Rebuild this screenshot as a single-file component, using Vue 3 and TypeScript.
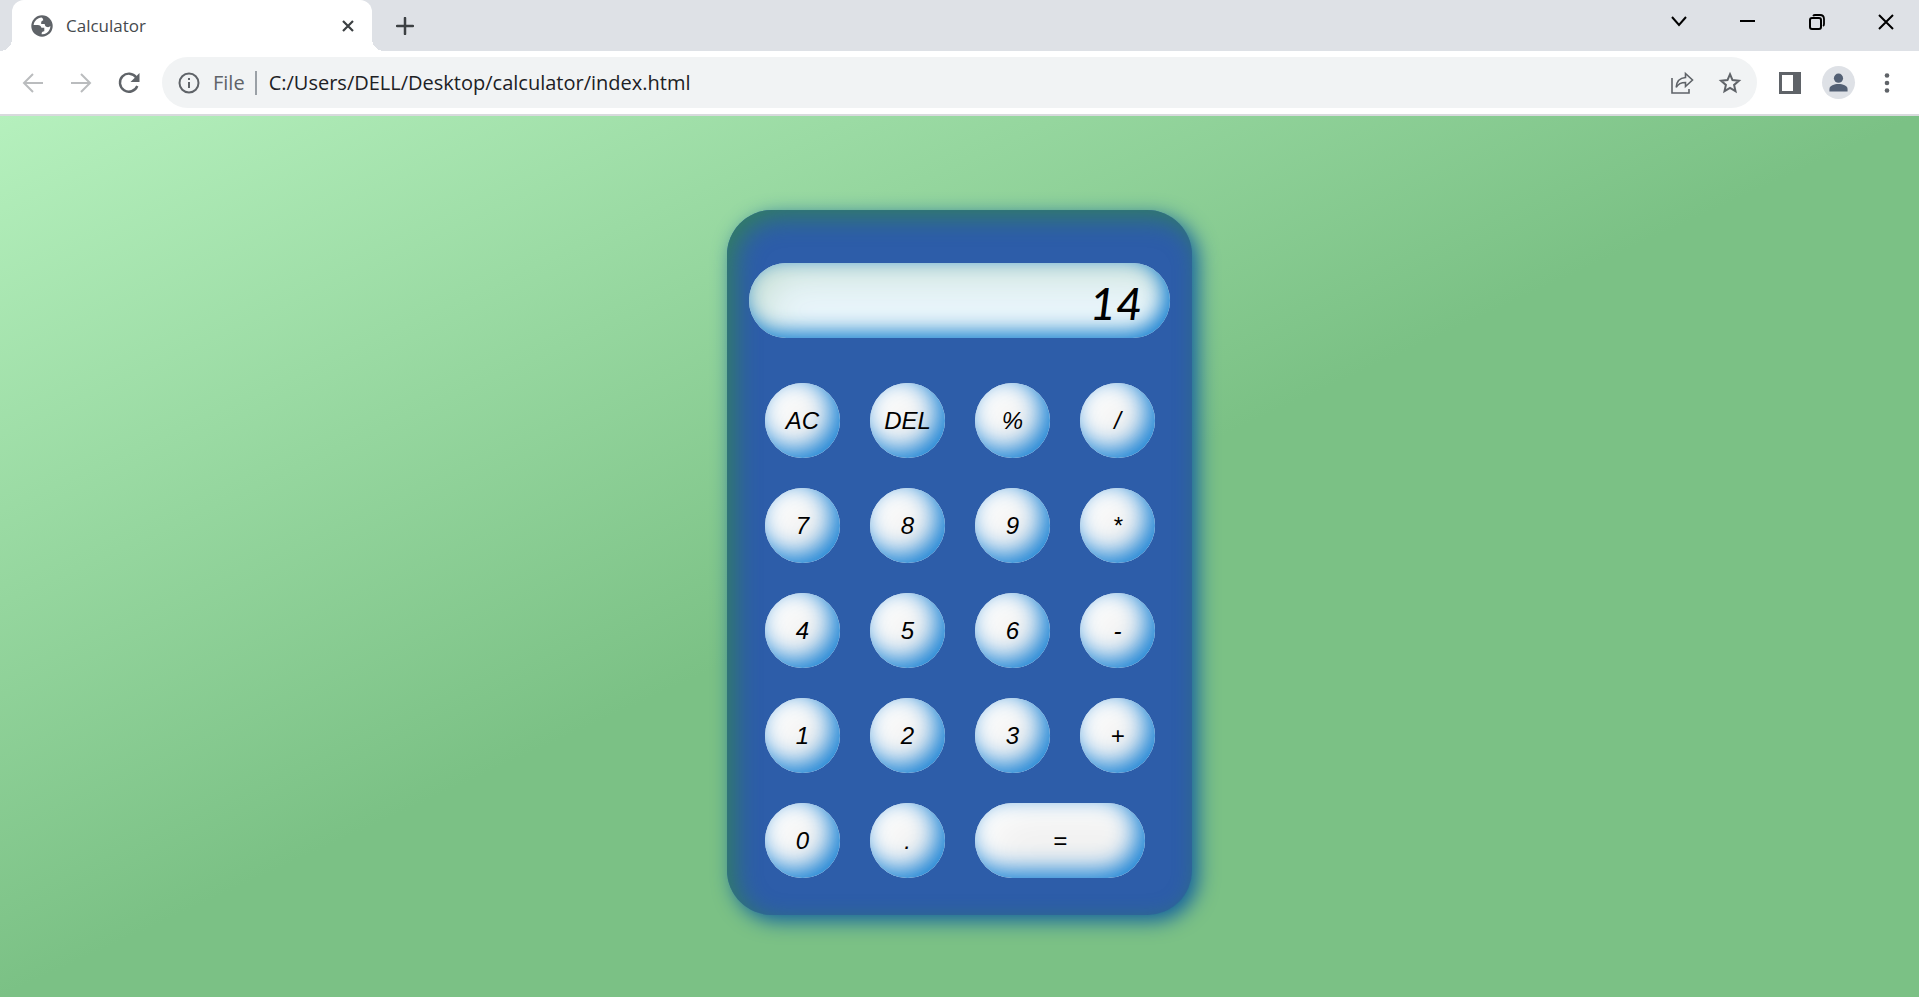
<script setup lang="ts">
import { ref } from 'vue'

interface Key {
  label: string
  wide?: boolean
}

const display = ref('14')
const address = ref('C:/Users/DELL/Desktop/calculator/index.html')

const keys: Key[] = [
  { label: 'AC' }, { label: 'DEL' }, { label: '%' }, { label: '/' },
  { label: '7' }, { label: '8' }, { label: '9' }, { label: '*' },
  { label: '4' }, { label: '5' }, { label: '6' }, { label: '-' },
  { label: '1' }, { label: '2' }, { label: '3' }, { label: '+' },
  { label: '0' }, { label: '.' }, { label: '=', wide: true },
]

function evaluate(source: string): string {
  const tokens = source.match(/\d+\.?\d*|\.\d+|[-+*/%]/g) ?? []
  const numbers: number[] = []
  const operators: string[] = []
  const rank = (op: string) => (op === '+' || op === '-' ? 1 : 2)
  const reduce = () => {
    const op = operators.pop()
    const b = numbers.pop() ?? 0
    const a = numbers.pop() ?? 0
    if (op === '+') numbers.push(a + b)
    else if (op === '-') numbers.push(a - b)
    else if (op === '*') numbers.push(a * b)
    else if (op === '/') numbers.push(a / b)
    else numbers.push(a % b)
  }
  for (const token of tokens) {
    if (/^[-+*/%]$/.test(token)) {
      while (operators.length && rank(operators[operators.length - 1]) >= rank(token)) reduce()
      operators.push(token)
    } else {
      numbers.push(Number(token))
    }
  }
  while (operators.length) reduce()
  return String(numbers[0] ?? '')
}

function press(label: string) {
  if (label === 'AC') display.value = ''
  else if (label === 'DEL') display.value = display.value.slice(0, -1)
  else if (label === '=') display.value = evaluate(display.value)
  else display.value += label
}
</script>

<template>
  <div class="browser">
    <header class="tabstrip">
      <div class="tab">
        <svg class="globe" viewBox="0 0 22 22" aria-hidden="true">
          <circle cx="11" cy="11" r="10.7" fill="#5f6368" />
          <path d="M10.500 2.600C6.500 3 3.200 6 2.600 10h4.200c2 0 3.400 1.100 3.600 2.800h2.900v3.500c-1.900 0-2.700.7-2.700 2.900 1.800.2 3.500-.2 5-1.200 2.300-1.500 3.700-4 3.800-7-1 1.200-2.500 1.500-4.200.7-1-.5-1.400-1.400-1.500-2.600h-3.500c-.3-2.200.3-3.400 2-3.600.1-1.300-.5-2.300-1.700-2.900z" fill="#fff" />
        </svg>
        <span class="tab-title">Calculator</span>
        <button class="icon-button tab-close" type="button" aria-label="Close tab">
          <svg viewBox="0 0 12 12"><path d="M1 1l10 10M11 1L1 11" fill="none" stroke="#3c4043" stroke-width="2.200" /></svg>
        </button>
      </div>
      <button class="icon-button new-tab" type="button" aria-label="New tab">
        <svg viewBox="0 0 18 18"><path d="M9 1v16M1 9h16" fill="none" stroke="#3c4043" stroke-width="2.500" stroke-linecap="round" /></svg>
      </button>
      <div class="window-controls">
        <button class="icon-button" type="button" aria-label="Search tabs">
          <svg viewBox="0 0 16 16"><path d="M1 3l7 8 7-8" fill="none" stroke="#000" stroke-width="2" /></svg>
        </button>
        <button class="icon-button" type="button" aria-label="Minimize">
          <svg viewBox="0 0 16 16"><path d="M0 7h15" fill="none" stroke="#000" stroke-width="2" /></svg>
        </button>
        <button class="icon-button" type="button" aria-label="Restore">
          <svg viewBox="0 0 16 16"><rect x="1" y="4" width="11" height="11" rx="2" fill="none" stroke="#000" stroke-width="2" /><path d="M4 2q.8-1 2-1h5q4 0 4 4v5q0 1.500-1 2" fill="none" stroke="#000" stroke-width="1.800" /></svg>
        </button>
        <button class="icon-button" type="button" aria-label="Close">
          <svg viewBox="0 0 16 16"><path d="M1 1l14 14M15 1L1 15" fill="none" stroke="#000" stroke-width="2" /></svg>
        </button>
      </div>
    </header>

    <nav class="toolbar" aria-label="Browser toolbar">
      <div class="navigation">
        <button class="icon-button" type="button" aria-label="Back">
          <svg viewBox="0 0 22 22"><path d="M21 11H2M11 2L2 11l9 9" fill="none" stroke="#babcbe" stroke-width="2" /></svg>
        </button>
        <button class="icon-button" type="button" aria-label="Forward">
          <svg viewBox="0 0 22 22"><path d="M1 11h19M11 2l9 9-9 9" fill="none" stroke="#babcbe" stroke-width="2" /></svg>
        </button>
        <button class="icon-button" type="button" aria-label="Reload">
          <svg viewBox="0 0 22 22"><path d="M18.300 5.500A9 9 0 1 0 19.300 14" fill="none" stroke="#5f6368" stroke-width="2.400" /><path d="M21.500 1v9h-9z" fill="#5f6368" /></svg>
        </button>
      </div>
      <div class="omnibox">
        <svg class="info" viewBox="0 0 22 22" aria-hidden="true"><circle cx="11" cy="11" r="9.500" fill="none" stroke="#5f6368" stroke-width="2" /><path d="M11 10v6M11 6v2" stroke="#5f6368" stroke-width="2" /></svg>
        <label class="scheme" for="address">File</label>
        <span class="divider"></span>
        <input id="address" v-model="address" class="address" type="text" spellcheck="false" />
        <button class="icon-button" type="button" aria-label="Share">
          <svg viewBox="0 0 24 24"><path d="M2 7v15h17v-4" fill="none" stroke="#5f6368" stroke-width="1.600" /><path d="M15.500 2.500l7 6.500-7 6.500v-4c-4.500 0-7.300 1.300-9.300 4.800.3-5 3.300-9.300 9.300-9.800z" fill="none" stroke="#5f6368" stroke-width="1.600" /></svg>
        </button>
        <button class="icon-button" type="button" aria-label="Bookmark">
          <svg viewBox="0 0 24 24"><path d="M12 3.200l2.500 5.900 6.400.6-4.800 4.200 1.400 6.300-5.500-3.300-5.500 3.300 1.400-6.300-4.800-4.200 6.400-.6z" fill="none" stroke="#5f6368" stroke-width="2" /></svg>
        </button>
      </div>
      <div class="tools">
        <button class="icon-button" type="button" aria-label="Side panel">
          <svg viewBox="0 0 22 22"><path d="M0 0h22v22H0zM3 3v16h11V3z" fill="#5f6368" fill-rule="evenodd" /></svg>
        </button>
        <button class="icon-button profile" type="button" aria-label="Profile">
          <svg viewBox="0 0 22 22"><circle cx="11" cy="6.500" r="4.800" fill="#536074" /><path d="M1.500 20.500v-2.800c0-3.600 5-5.200 9.500-5.200s9.500 1.600 9.500 5.200v2.800z" fill="#536074" /></svg>
        </button>
        <button class="icon-button" type="button" aria-label="Menu">
          <svg viewBox="0 0 22 22"><g fill="#5f6368"><circle cx="11" cy="3.500" r="2.300" /><circle cx="11" cy="11" r="2.300" /><circle cx="11" cy="18.500" r="2.300" /></g></svg>
        </button>
      </div>
    </nav>

    <main class="page">
      <section class="calculator" aria-label="Calculator">
        <input v-model="display" class="display" type="text" aria-label="Result" />
        <div class="keys">
          <button
            v-for="key in keys"
            :key="key.label"
            class="key"
            :class="{ wide: key.wide }"
            type="button"
            @click="press(key.label)"
          >{{ key.label }}</button>
        </div>
      </section>
    </main>
  </div>
</template>

<style>
body {
  margin: 0;
}
</style>

<style scoped>
.browser {
  display: flex;
  flex-direction: column;
  min-height: 100vh;
  font-family: "Open Sans", "Noto Sans", sans-serif;
}

.icon-button {
  display: flex;
  align-items: center;
  justify-content: center;
  flex: none;
  margin: 0;
  padding: 0;
  border: 0;
  background: none;
}

.icon-button svg {
  display: block;
  width: 100%;
}

.tabstrip {
  display: flex;
  height: 51px;
  padding-left: 12px;
  background: #dee1e6;
}

.tab {
  position: relative;
  display: flex;
  align-items: center;
  box-sizing: border-box;
  width: 360px;
  padding: 0 18px 0 19px;
  border-radius: 12px 12px 0 0;
  background: #fff;
}

.tab::before,
.tab::after {
  content: "";
  position: absolute;
  bottom: 0;
  width: 12px;
  height: 12px;
}

.tab::before {
  right: 100%;
  background: radial-gradient(circle at 0 0, transparent 12px, #fff 12px);
}

.tab::after {
  left: 100%;
  background: radial-gradient(circle at 100% 0, transparent 12px, #fff 12px);
}

.globe {
  flex: none;
  width: 22px;
}

.tab-title {
  flex: 1;
  margin-left: 13px;
  color: #45494d;
  font-size: 17px;
}

.tab-close {
  width: 12px;
}

.new-tab {
  width: 18px;
  margin-left: 24px;
}

.window-controls {
  display: flex;
  align-items: center;
  gap: 53px;
  height: 43px;
  margin-left: auto;
  padding-right: 25px;
}

.window-controls .icon-button {
  width: 16px;
}

.toolbar {
  display: flex;
  align-items: center;
  height: 63px;
  border-bottom: 2px solid #d8dadd;
  background: #fff;
}

.navigation {
  display: flex;
  gap: 26px;
  margin: 0 22px;
}

.navigation .icon-button {
  width: 22px;
}

.omnibox {
  display: flex;
  flex: 1;
  align-items: center;
  box-sizing: border-box;
  height: 51px;
  padding: 0 15px 0 16px;
  border-radius: 26px;
  background: #f1f3f4;
}

.omnibox .icon-button {
  width: 24px;
  margin-left: 24px;
}

.info {
  flex: none;
  width: 22px;
}

.scheme {
  margin-left: 13px;
  color: #5f6368;
  font-size: 20px;
}

.divider {
  width: 2px;
  height: 24px;
  margin: 0 12px 0 10px;
  background: #9aa0a6;
}

.address {
  flex: 1;
  min-width: 0;
  padding: 0;
  border: 0;
  outline: 0;
  background: none;
  color: #202124;
  font: 20px "Open Sans", "Noto Sans", sans-serif;
}

.tools {
  display: flex;
  align-items: center;
  gap: 21px;
  margin: 0 21px 0 22px;
}

.tools .icon-button {
  width: 22px;
}

.tools .profile {
  box-sizing: border-box;
  width: 33px;
  height: 33px;
  padding: 6px;
  border-radius: 50%;
  background: #dee1e6;
}

.page {
  display: flex;
  flex: 1;
  align-items: center;
  justify-content: center;
  padding: 52px 0 40px;
  background: linear-gradient(to bottom right, #b5f0bd, #7bc185 50%);
}

.calculator {
  display: flex;
  flex-direction: column;
  align-items: center;
  box-sizing: border-box;
  width: 465px;
  padding: 53px 22px 22px;
  border-radius: 45px;
  background: #2d5da9;
  box-shadow: 6px 6px 20px #1360a0, inset 8px 8px 24px #327d64;
}

.display {
  box-sizing: border-box;
  width: 100%;
  height: 75px;
  margin-bottom: 30px;
  padding: 4px 28px 0;
  border: 0;
  border-radius: 38px;
  outline: 0;
  background: #e9f5fb;
  box-shadow: inset -6px -6px 20px #1a82d4, inset 10px 10px 40px #c4ddd0;
  color: #000;
  font: italic 500 45px Lato, sans-serif;
  text-align: right;
}

.keys {
  display: flex;
  flex-wrap: wrap;
  width: 420px;
}

.key {
  width: 75px;
  height: 75px;
  margin: 15px;
  padding: 0 0 0 1px;
  border: 0;
  border-radius: 38px;
  background: #f1f1f1;
  box-shadow: inset -8px -8px 23px #1a82d4, inset 10px 10px 40px #fff;
  color: #000;
  font: italic 24px "Liberation Sans", Arial, sans-serif;
}

.key.wide {
  width: 170px;
}
</style>
